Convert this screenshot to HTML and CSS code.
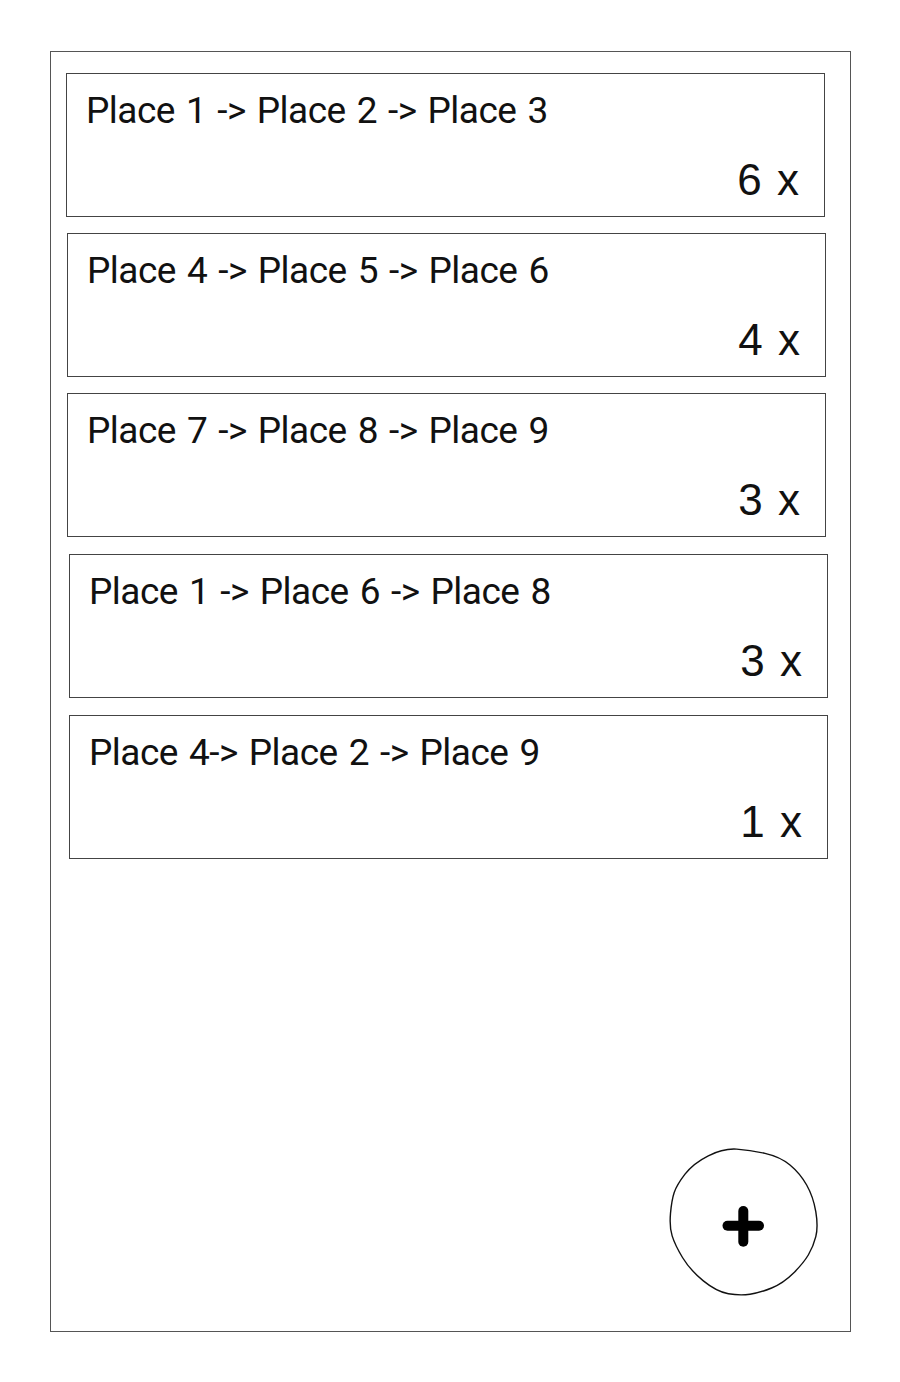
FILE: index.html
```html
<!DOCTYPE html>
<html lang="en">
<head>
  <meta charset="UTF-8" />
  <meta name="viewport" content="width=device-width,initial-scale=1" />
  <title>Routes</title>
  <link rel="stylesheet" href="styles.css">
</head>
<body>

  <!-- Phone frame -->
  <div class="frame">
    <div class="routes">
      <div class="route">
        <div class="route-path">Place 1 -&gt; Place 2 -&gt; Place 3</div>
        <div class="route-count">6 x</div>
      </div>
      <div class="route shift-1">
        <div class="route-path">Place 4 -&gt; Place 5 -&gt; Place 6</div>
        <div class="route-count">4 x</div>
      </div>
      <div class="route shift-1">
        <div class="route-path">Place 7 -&gt; Place 8 -&gt; Place 9</div>
        <div class="route-count">3 x</div>
      </div>
      <div class="route shift-3">
        <div class="route-path">Place 1 -&gt; Place 6 -&gt; Place 8</div>
        <div class="route-count">3 x</div>
      </div>
      <div class="route shift-3">
        <div class="route-path">Place 4-&gt; Place 2 -&gt; Place 9</div>
        <div class="route-count">1 x</div>
      </div>
    </div>

    <!-- Add button -->
    <svg class="fab" width="170" height="165" viewBox="0 0 170 165">
      <path class="fab-ring" d="M76.65,9.15 Q90,10 105,13.35 Q120,16.7 130,25 Q140,33.3 146.65,45 Q153.3,56.7 155.8,71.7 Q158.3,86.7 155.8,96.7 Q153.3,106.7 148.3,115 Q143.3,123.3 133.3,133.3 Q123.3,143.3 111.65,148 Q100,152.7 90,154.2 Q80,155.7 68.35,153.7 Q56.7,151.7 43.35,140.85 Q30,130 22.5,117.5 Q15,105 12.15,95.85 Q9.3,86.7 10.5,73.35 Q11.7,60 14.2,52.5 Q16.7,45 25,34.15 Q33.3,23.3 48.3,15.8 Q63.3,8.3 76.65,9.15 Z"/>
      <line class="fab-plus" x1="67.5" y1="85.7" x2="99" y2="85.7"/>
      <line class="fab-plus" x1="83.3" y1="71" x2="83.3" y2="101.7"/>
    </svg>
  </div>

</body>
</html>
```

FILE: styles.css
```css
body { margin: 0; background: #fff; }

/* Outer frame */
.frame {
  position: relative;
  width: 801px; height: 1281px;
  margin: 51px 0 0 50px;
  box-sizing: border-box;
  border: 1px solid #555;
}

/* Route cards */
.routes {
  display: flex; flex-direction: column;
  gap: 16px;
  padding: 21px 0 0 15px;
}
.route {
  width: 759px; height: 144px;
  box-sizing: border-box;
  border: 1px solid #444;
  display: flex; flex-direction: column; justify-content: space-between;
  padding: 15px 25px 11px 19px;
}
.route.shift-1 { margin-left: 1px; }
.route.shift-3 { margin-left: 3px; margin-top: 1px; }

.route-path {
  font-family: Roboto, sans-serif;
  font-size: 37px;
  letter-spacing: -0.5px;
  word-spacing: 2.3px;
  color: #111;
  white-space: nowrap;
}
.route-count {
  font-family: "Liberation Sans", Arial, sans-serif;
  font-size: 44px;
  word-spacing: 3px;
  color: #111;
  text-align: right;
}

/* Floating add button */
.fab {
  position: absolute;
  left: 609px; top: 1088px;
}
.fab-ring { fill: #fff; stroke: #111; stroke-width: 1.4; stroke-linejoin: round; }
.fab-plus { stroke: #000; stroke-width: 10; stroke-linecap: round; }
```
